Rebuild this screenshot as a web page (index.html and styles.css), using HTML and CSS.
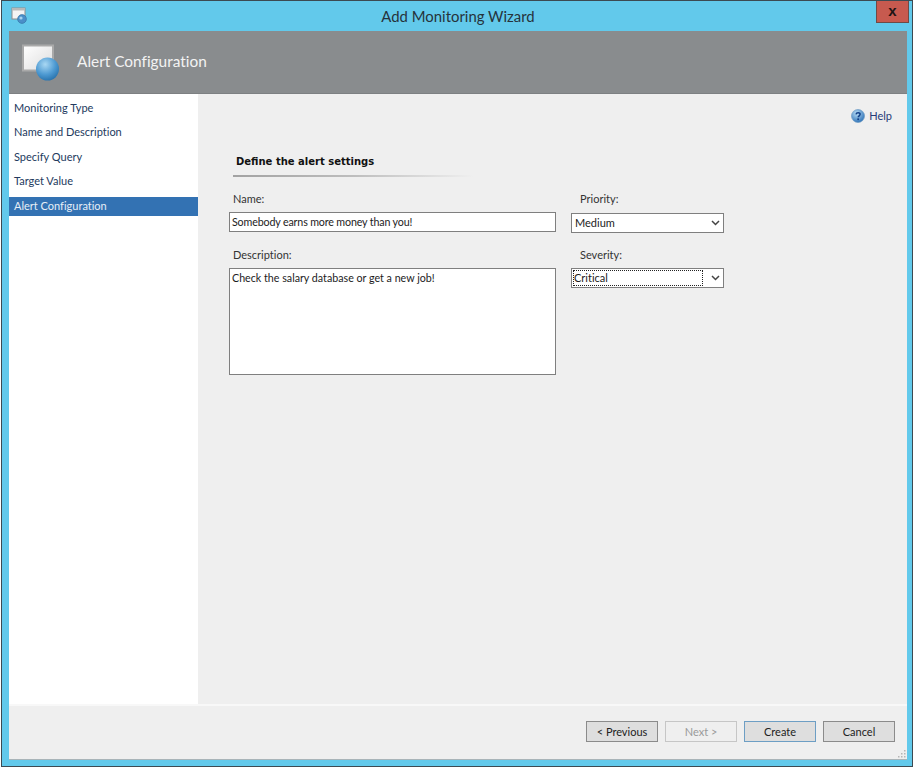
FILE: index.html
```html
<!DOCTYPE html>
<html lang="en">
<head>
<meta charset="utf-8">
<title>Add Monitoring Wizard</title>
<link rel="stylesheet" href="styles.css">
</head>
<body>
<div class="window">
  <div class="titlebar">
    <svg class="app-icon" width="18" height="18" viewBox="0 0 18 18">
      <rect x="1" y="1" width="13" height="11" fill="#f4f4f4" stroke="#8d8d8d"/>
      <rect x="1" y="1" width="13" height="2.5" fill="#b9b9b9"/>
      <circle cx="11" cy="12" r="4.4" fill="#4a8fc9" stroke="#2f6b9e" stroke-width=".6"/>
      <circle cx="10" cy="11" r="1.6" fill="#a5d2ef"/>
    </svg>
    <div class="title">Add Monitoring Wizard</div>
    <div class="close"><span>x</span></div>
  </div>
  <div class="client">
    <header class="banner">
      <svg class="banner-icon" width="40" height="40" viewBox="0 0 40 40">
        <defs>
          <linearGradient id="page" x1="0" y1="0" x2="1" y2="1"><stop offset="0" stop-color="#ffffff"/><stop offset="1" stop-color="#dcdcdc"/></linearGradient>
          <radialGradient id="ball" cx=".4" cy=".3" r=".8"><stop offset="0" stop-color="#a9d8f3"/><stop offset=".55" stop-color="#4e9ad2"/><stop offset="1" stop-color="#1f6aa5"/></radialGradient>
        </defs>
        <rect x="1" y="3.5" width="30" height="25" fill="url(#page)" stroke="#a9a9a9" stroke-width="2"/>
        <circle cx="25.5" cy="27" r="11.5" fill="url(#ball)"/>
      </svg>
      <h1 class="banner-title">Alert Configuration</h1>
    </header>
    <div class="middle">
      <nav class="steps">
        <div class="step">Monitoring Type</div>
        <div class="step">Name and Description</div>
        <div class="step">Specify Query</div>
        <div class="step">Target Value</div>
        <div class="step step-active">Alert Configuration</div>
      </nav>
      <main class="content">
        <div class="help-row">
          <div class="help">
            <svg width="14" height="14" viewBox="0 0 14 14">
              <defs><radialGradient id="hb" cx=".4" cy=".3" r=".8"><stop offset="0" stop-color="#b7dcf5"/><stop offset="1" stop-color="#1e66b0"/></radialGradient></defs>
              <circle cx="7" cy="7" r="6.5" fill="url(#hb)" stroke="#6f9cc4" stroke-width=".7"/>
              <path d="M5 5.4c.2-1.2 1.1-1.7 2.1-1.7 1.2 0 2 .7 2 1.6 0 1.5-1.9 1.5-1.9 3" fill="none" stroke="#123f86" stroke-width="1.5"/>
              <rect x="6.3" y="9.4" width="1.7" height="1.7" fill="#123f86"/>
            </svg>
            <span>Help</span>
          </div>
        </div>
        <h2 class="section-title">Define the alert settings</h2>
        <div class="section-rule"></div>
        <div class="form">
          <div class="col-left">
            <label class="label">Name:</label>
            <div class="field field-single">Somebody earns more money than you!</div>
            <label class="label label-second">Description:</label>
            <div class="field field-multi">Check the salary database or get a new job!</div>
          </div>
          <div class="col-right">
            <label class="label">Priority:</label>
            <div class="combo"><span class="combo-value">Medium</span>
              <svg class="chevron" width="9" height="6" viewBox="0 0 9 6"><path d="M1 1l3.5 3.5L8 1" fill="none" stroke="#444" stroke-width="1.5"/></svg>
            </div>
            <label class="label label-second">Severity:</label>
            <div class="combo"><span class="combo-value combo-focus">Critical</span>
              <svg class="chevron" width="9" height="6" viewBox="0 0 9 6"><path d="M1 1l3.5 3.5L8 1" fill="none" stroke="#444" stroke-width="1.5"/></svg>
            </div>
          </div>
        </div>
      </main>
    </div>
    <footer class="footer">
      <button class="btn">&lt; Previous</button>
      <button class="btn btn-disabled">Next &gt;</button>
      <button class="btn btn-default">Create</button>
      <button class="btn">Cancel</button>
      <svg class="grip" width="10" height="10" viewBox="0 0 10 10" fill="#b5b5b5">
        <rect x="7" y="7" width="1.5" height="1.5"/><rect x="4" y="7" width="1.5" height="1.5"/><rect x="1" y="7" width="1.5" height="1.5"/>
        <rect x="7" y="4" width="1.5" height="1.5"/><rect x="4" y="4" width="1.5" height="1.5"/><rect x="7" y="1" width="1.5" height="1.5"/>
      </svg>
    </footer>
  </div>
</div>
</body>
</html>
```

FILE: styles.css
```css
* { box-sizing: border-box; }
html, body { margin: 0; padding: 0; background: #ffffff; }
body {
  width: 916px;
  height: 768px;
  font-family: Lato, "Liberation Sans", sans-serif;
  font-size: 11px;
  font-variant-ligatures: none;
  color: #333;
  overflow: hidden;
}
.window {
  margin: 0 3px 0 1px;
  width: 912px;
  height: 767px;
  border: 1px solid #3c4a52;
  background: #62c9eb;
  display: flex;
  flex-direction: column;
  padding: 0 5px 6px 7px;
}
.titlebar {
  height: 30px;
  flex: none;
  display: flex;
  align-items: center;
  justify-content: center;
  position: relative;
}
.app-icon { position: absolute; left: 2px; top: 6px; }
.title { font-size: 14.9px; color: #26333b; }
.close {
  position: absolute;
  right: -2px;
  top: 0;
  width: 33px;
  height: 22px;
  background: #c75a4f;
  border: 1px solid #6f4a46;
  border-top: none;
  display: flex;
  align-items: center;
  justify-content: center;
}
.close span { font: bold 15px/1 "Liberation Sans", sans-serif; color: #1c1414; margin-top: -3px; }
.client {
  flex: 1;
  display: flex;
  flex-direction: column;
  background: #efefef;
  border-bottom: 1px solid #a9b4b8;
}
.banner {
  height: 63px;
  flex: none;
  background: #898c8e;
  border-bottom: 1px solid #7d8082;
  display: flex;
  align-items: center;
  padding-left: 13px;
}
.banner-title { margin: 0 0 2px 15px; font-size: 15.4px; font-weight: 400; color: #f3f3f3; }
.middle { flex: 1; display: flex; min-height: 0; }
.steps {
  width: 189px;
  flex: none;
  background: #ffffff;
  padding-top: 2px;
}
.step {
  height: 24.4px;
  padding-left: 5px;
  line-height: 24px;
  color: #233a5e;
}
.step-active {
  height: 19px;
  line-height: 18px;
  margin-top: 3px;
  background: #3372b3;
  color: #e6eef6;
}
.content { flex: 1; padding: 0 0 0 31px; }
.help-row { display: flex; justify-content: flex-end; padding: 12px 15px 0 0; }
.help { display: flex; align-items: center; gap: 4px; color: #263a78; height: 19px; }
.section-title {
  margin: 29px 0 0 7px;
  font: bold 10px/16px "DejaVu Sans", sans-serif;
  color: #111;
}
.section-rule {
  margin: 5px 0 0 4px;
  width: 240px;
  height: 2px;
  background: linear-gradient(to right, #a2a2a2, #bdbdbd 50%, #efefef);
}
.form { display: flex; gap: 15px; margin-top: 14px; }
.col-left { width: 327px; }
.col-right { width: 153px; }
.label { display: block; height: 17px; line-height: 16px; padding-left: 4px; color: #333; }
.col-right .label { padding-left: 9px; }
.label-second { margin-top: 15px; }
.col-right .label-second { margin-top: 14px; }
.field {
  background: #fff;
  border: 1px solid #7f7f7f;
  color: #1c1c1c;
  padding-left: 2px;
  font-size: 10.7px;
}
.field-single { height: 20px; line-height: 17px; margin-top: 4px; letter-spacing: -0.15px; }
.field-multi { height: 107px; line-height: 17px; margin-top: 4px; }
.combo {
  height: 20px;
  margin-top: 5px;
  background: #fff;
  border: 1px solid #7f7f7f;
  display: flex;
  align-items: center;
  justify-content: space-between;
  padding: 1px 3px 1px 1px;
  color: #1c1c1c;
}
.col-right .label-second + .combo { margin-top: 4px; }
.combo-value { flex: 1; height: 16px; line-height: 16px; padding-left: 2px; }
.combo-focus { outline: 1px dotted #222; outline-offset: -1px; margin-right: 8px; padding-left: 1px; background: #fff; }
.footer {
  height: 55px;
  flex: none;
  border-top: 2px solid #f8f8f8;
  display: flex;
  align-items: flex-start;
  justify-content: flex-end;
  gap: 7px;
  padding: 15px 12px 0 0;
  position: relative;
}
.btn {
  width: 72px;
  height: 21px;
  padding: 0;
  border: 1px solid #8b8b8b;
  background: #dedede;
  font: 11px/17px Lato, "Liberation Sans", sans-serif;
  font-variant-ligatures: none;
  color: #222;
}
.btn-disabled { background: #efefef; border-color: #c6c6c6; color: #9a9a9a; }
.btn-default { border-color: #6d9ec4; }
.grip { position: absolute; right: 0; bottom: 0; }
```
